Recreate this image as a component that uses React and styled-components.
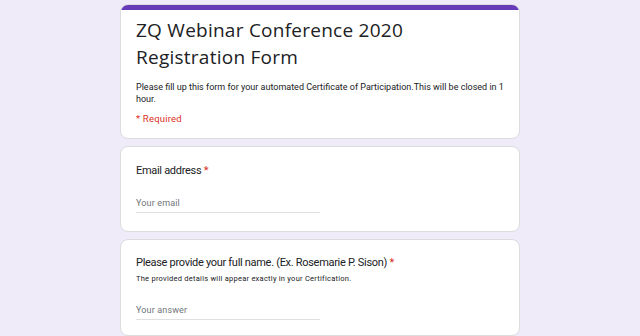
import React from "react";
import styled, { createGlobalStyle } from "styled-components";

const GlobalStyle = createGlobalStyle`
  html, body {
    margin: 0;
    padding: 0;
    background: #f0ebf8;
  }
  body {
    font-family: Roboto, "Liberation Sans", sans-serif;
  }
`;

const Page = styled.div`
  width: 640px;
  height: 336px;
  overflow: hidden;
  background: #f0ebf8;
  display: flex;
  justify-content: center;
  padding-top: 4px;
  box-sizing: border-box;
`;

const Column = styled.div`
  width: 400px;
  display: flex;
  flex-direction: column;
  gap: 7px;
`;

const Card = styled.div`
  background: #fff;
  border: 1px solid #dadce0;
  border-radius: 8px;
  overflow: hidden;
  box-sizing: border-box;
`;

const TopBar = styled.div`
  height: 6px;
  background: #673ab7;
  margin: -1px -1px 0;
`;

const CardBody = styled.div`
  padding: ${(p) => p.$pad || "14px 15px 14px"};
`;

const Title = styled.h1`
  margin: 0;
  font-family: "Open Sans", Roboto, sans-serif;
  font-weight: 400;
  font-size: 19px;
  line-height: 27px;
  letter-spacing: 0.25px;
  color: #202124;
`;

const Description = styled.p`
  margin: 10px 0 0;
  font-size: 9px;
  line-height: 12px;
  color: #202124;
`;

const Required = styled.div`
  margin-top: 8px;
  font-size: 9.5px;
  line-height: 12px;
  letter-spacing: 0.2px;
  color: #d93025;
`;

const Question = styled.div`
  font-size: 11px;
  line-height: 17px;
  letter-spacing: -0.3px;
  color: #202124;
`;

const Star = styled.span`
  color: #d93025;
`;

const Hint = styled.div`
  margin-top: 2px;
  font-size: 7.5px;
  line-height: 12px;
  color: #202124;
  letter-spacing: 0.25px;
`;

const Input = styled.div`
  margin-top: ${(p) => p.$top || "18px"};
  width: 184px;
  border-bottom: 1px solid #e0e0e0;
  font-size: 9px;
  line-height: 13px;
  letter-spacing: 0.15px;
  padding-bottom: 2px;
  color: #70757a;
`;

export default function App() {
  return (
    <>
      <GlobalStyle />
      <Page>
        <Column>
          <Card>
            <TopBar />
            <CardBody $pad="7px 15px 20px">
              <Title>
                ZQ Webinar Conference 2020
                <br />
                Registration Form
              </Title>
              <Description>
                Please fill up this form for your automated Certificate of
                Participation.This will be closed in 1 hour.
              </Description>
              <Required>* Required</Required>
            </CardBody>
          </Card>
          <Card>
            <CardBody $pad="15px 15px 22px">
              <Question>
                Email address <Star>*</Star>
              </Question>
              <Input>Your email</Input>
            </CardBody>
          </Card>
          <Card>
            <CardBody $pad="14px 15px 20px">
              <Question>
                Please provide your full name. (Ex. Rosemarie P. Sison){" "}
                <Star>*</Star>
              </Question>
              <Hint>The provided details will appear exactly in your Certification.</Hint>
              <Input $top="19px">Your answer</Input>
            </CardBody>
          </Card>
        </Column>
      </Page>
    </>
  );
}
